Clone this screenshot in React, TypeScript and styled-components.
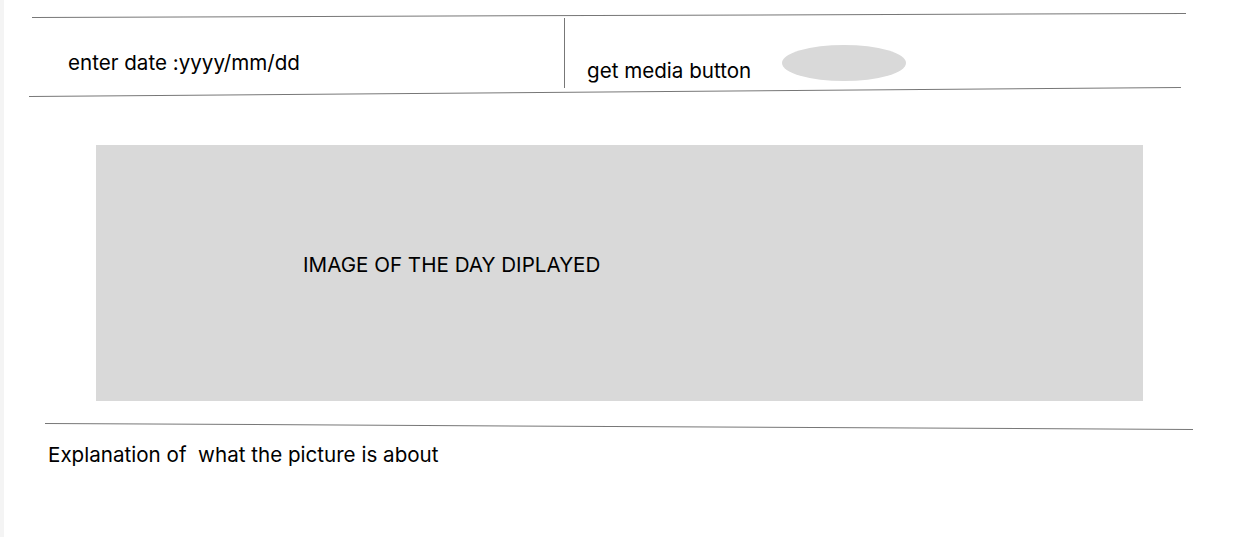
import React from "react";
import styled, { createGlobalStyle } from "styled-components";

const Global = createGlobalStyle`
  html, body { margin: 0; padding: 0; background: #ffffff; }
  body { font-family: "Inter", sans-serif; color: #000000; }
`;

const Page = styled.div`
  display: flex;
  width: 1257px;
  height: 537px;
  overflow: hidden;
`;

const Strip = styled.div`
  width: 4px;
  flex: none;
  background: #f4f4f4;
`;

const Main = styled.main`
  flex: 1;
  display: flex;
  flex-direction: column;
`;

const Rule = styled.div<{ $left: number; $width: number; $tilt: number; $top: number }>`
  margin-left: ${(p) => p.$left}px;
  margin-top: ${(p) => p.$top}px;
  width: ${(p) => p.$width}px;
  height: 1px;
  background: #777777;
  transform: rotate(${(p) => p.$tilt}deg);
  transform-origin: left center;
`;

const Header = styled.header`
  display: flex;
  height: 70px;
  margin-left: 28px;
`;

const DateCell = styled.div`
  width: 533px;
  display: flex;
  align-items: flex-start;
  padding: 33px 0 0 36px;
  box-sizing: border-box;
  border-right: 1px solid #777777;
  font-size: 20.6px;
  line-height: 24px;
`;

const ButtonCell = styled.div`
  display: flex;
  align-items: flex-start;
  padding: 41px 0 0 22px;
  font-size: 20.6px;
  line-height: 24px;
`;

const MediaButton = styled.button`
  width: 124px;
  height: 36px;
  margin: -14px 0 0 31px;
  border: none;
  border-radius: 50%;
  background: #d9d9d9;
  padding: 0;
`;

const ImageBox = styled.section`
  margin: 48px 0 0 92px;
  width: 1047px;
  height: 256px;
  background: #d9d9d9;
  display: flex;
  align-items: center;
  padding: 0 0 18px 207px;
  box-sizing: border-box;
  font-size: 20.6px;
`;

const Explanation = styled.p`
  margin: 19px 0 0 44px;
  font-size: 20.6px;
  line-height: 24px;
`;

export default function App() {
  return (
    <>
      <Global />
      <Page>
        <Strip />
        <Main>
          <Rule $left={28} $width={1154} $tilt={-0.2} $top={17} />
          <Header>
            <DateCell>enter date :yyyy/mm/dd</DateCell>
            <ButtonCell>
              get media button
              <MediaButton aria-label="get media" />
            </ButtonCell>
          </Header>
          <Rule $left={25} $width={1152} $tilt={-0.45} $top={8} />
          <ImageBox>IMAGE OF THE DAY DIPLAYED</ImageBox>
          <Rule $left={41} $width={1148} $tilt={0.3} $top={22} />
          <Explanation>Explanation of&nbsp; what the picture is about</Explanation>
        </Main>
      </Page>
    </>
  );
}
